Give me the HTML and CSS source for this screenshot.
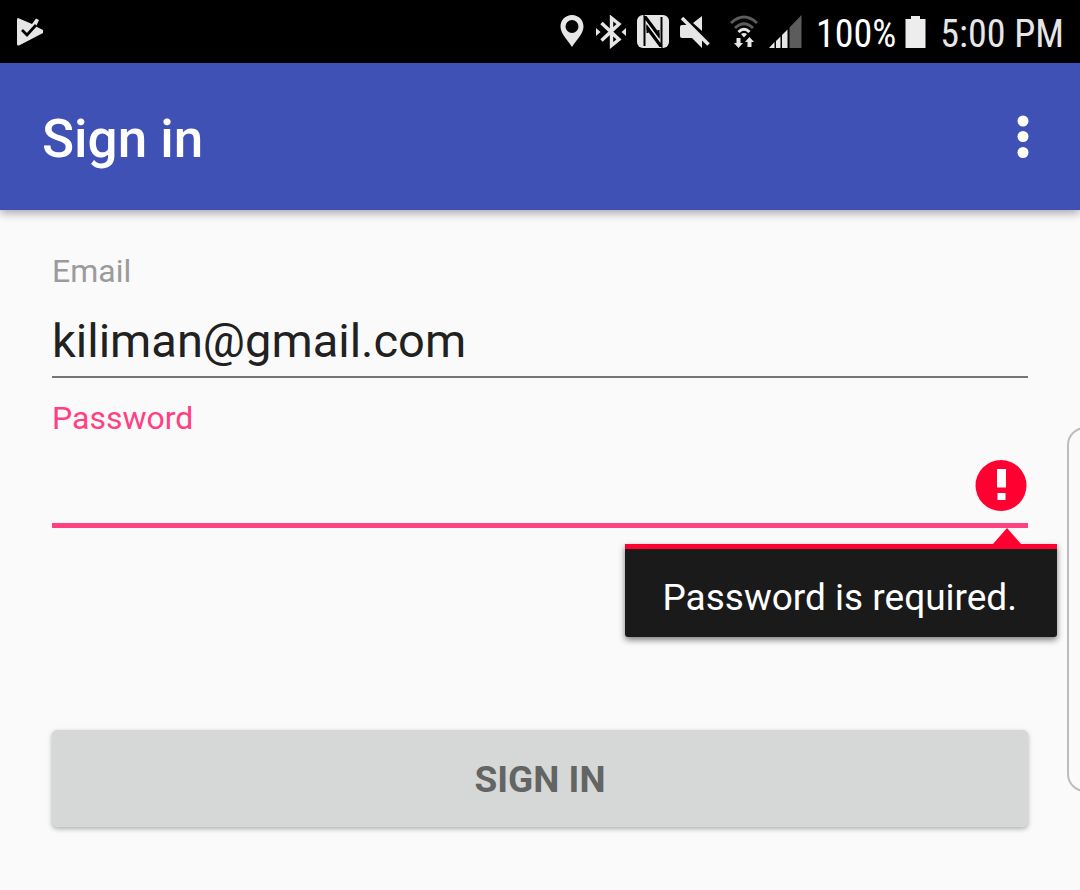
FILE: index.html
```html
<!DOCTYPE html>
<html lang="en">
<head>
<meta charset="utf-8">
<meta name="viewport" content="width=device-width, initial-scale=1">
<title>Sign in</title>
<link rel="stylesheet" href="styles.css">
</head>
<body class="screen">
<div class="status-bar">
  <svg class="status-app" width="28" height="30" viewBox="0 0 28 30" aria-hidden="true">
    <path d="M2 1L16 7L20 1.500L23 3L20 9.500L27 13V16L3 28.500Q1 29 1 27V3Q1 1 2 1Z" fill="#e6e6e6"/>
    <path d="M6 13L11 18L20 8" fill="none" stroke="#000" stroke-width="2.800"/>
  </svg>
  <div class="status-icons">
    <svg width="24" height="34" viewBox="0 0 24 34" aria-hidden="true">
      <path fill-rule="evenodd" d="M12 0C5.500 0 .5 5 .5 11.500C.5 19 8 25 12 32C16 25 23.500 19 23.500 11.500C23.500 5 18.500 0 12 0ZM12 5A6.500 6.500 0 1 1 12 18A6.500 6.500 0 1 1 12 5Z" fill="#e6e6e6"/>
    </svg>
    <svg class="icon-bluetooth" width="30" height="34" viewBox="0 0 30 34" aria-hidden="true">
      <path d="M5.500 8L23 24.500L15.500 30.500V3L23 9L5.500 25.500" fill="none" stroke="#e6e6e6" stroke-width="3.400"/>
      <path d="M0 13L4.500 17L0 21ZM30 13L25.500 17L30 21Z" fill="#e6e6e6"/>
    </svg>
    <svg width="34" height="34" viewBox="0 0 34 34" aria-hidden="true">
      <rect x="1" y="0" width="32" height="33" rx="6" fill="#e6e6e6"/>
      <path d="M8.500 31V2L22.500 21V15M25.500 2V31L11.500 12V18" fill="none" stroke="#000" stroke-width="2"/>
      <path d="M7.500 1H10.500L23.500 18.500V23L9.500 4.500ZM26.500 32H23.500L10.500 14.500V10L24.500 28.500Z" fill="#000"/>
    </svg>
    <svg width="30" height="34" viewBox="0 0 30 34" aria-hidden="true">
      <path d="M0 12Q0 10 2 10H8L22 24V33L12 23H2Q0 23 0 21ZM13 8L22 1V16Z" fill="#e6e6e6"/>
      <path d="M2 3L28.500 29.500" stroke="#e6e6e6" stroke-width="3.500"/>
    </svg>
    <svg class="icon-wifi" width="30" height="34" viewBox="0 0 30 34" aria-hidden="true">
      <g fill="none" stroke-width="3">
        <path d="M2 8Q15 -4 28 8" stroke="#5c5c5c"/>
        <path d="M6 13Q15 4.500 24 13" stroke="#5c5c5c"/>
        <path d="M9.500 17Q15 11.500 20.500 17" stroke="#e6e6e6"/>
      </g>
      <path d="M12 19Q15 17 18 19L15 22.500ZM7.500 23H11.500V28H14L9.500 33L5 28H7.500ZM18.500 32H22.500V27H25L20.500 22L16 27H18.500Z" fill="#e6e6e6"/>
    </svg>
    <svg width="33" height="34" viewBox="0 0 33 34" aria-hidden="true">
      <path d="M0 33L5.500 27V33ZM7 26L11.500 21.500V33H7ZM13 20L18.500 14.500V33H13Z" fill="#e6e6e6"/>
      <path d="M20.500 12.500L32.500 0V33H20.500Z" fill="#5c5c5c"/>
    </svg>
  </div>
  <span class="status-text battery-level">100%</span>
  <svg class="battery" width="21" height="34" viewBox="0 0 21 34" aria-hidden="true">
    <path d="M6 1H15V4H20.500V33H.5V4H6Z" fill="#ededed"/>
  </svg>
  <span class="status-text">5:00 PM</span>
</div>

<header class="app-bar">
  <h1 class="app-title">Sign in</h1>
  <button class="menu-button" type="button" aria-label="More options">
    <svg width="12" height="44" viewBox="0 0 12 44" aria-hidden="true">
      <g fill="#fff"><circle cx="6" cy="6" r="5.500"/><circle cx="6" cy="21.500" r="5.500"/><circle cx="6" cy="37.500" r="5.500"/></g>
    </svg>
  </button>
</header>

<main>
  <form class="form">
    <div class="field">
      <label class="label" for="email">Email</label>
      <input class="input" id="email" type="email" value="kiliman@gmail.com">
    </div>
    <div class="field field-error">
      <label class="label" for="password">Password</label>
      <input class="input" id="password" type="password" aria-invalid="true" aria-describedby="password-error">
      <svg class="error-icon" width="52" height="52" viewBox="0 0 52 52" aria-hidden="true">
        <circle cx="26" cy="25.500" r="25.500" fill="#ff0031"/>
        <path d="M22 9H31V27.500H22ZM22.500 33H30.500V40H22.500Z" fill="#fff"/>
      </svg>
      <div class="error-popup" id="password-error" role="alert">Password is required.</div>
    </div>
    <button class="submit" type="button">SIGN IN</button>
  </form>
</main>
<div class="edge-handle"></div>
</body>
</html>
```

FILE: styles.css
```css
* {
  box-sizing: border-box;
}

.screen {
  margin: 0;
  min-height: 100vh;
  background: #fafafa;
  color: #212121;
  font-family: Roboto, "Liberation Sans", sans-serif;
}

.status-bar {
  display: flex;
  align-items: center;
  height: 63px;
  padding: 0 16px;
  background: #000;
  color: #e6e6e6;
  font-family: "Roboto Condensed", Roboto, sans-serif;
  font-size: 38px;
  line-height: 48px;
  white-space: nowrap;
}

.status-app {
  margin-right: auto;
}

.status-icons {
  display: flex;
  gap: 10px;
  margin-right: 14px;
}

.icon-bluetooth {
  margin-left: 2px;
}

.icon-wifi {
  margin-left: 9px;
}

.status-text {
  padding-top: 4px;
}

.battery-level {
  color: #fff;
}

.battery {
  margin: 0 14px 0 9px;
}

.app-bar {
  display: flex;
  align-items: center;
  justify-content: space-between;
  height: 147px;
  padding: 0 35px 0 42px;
  background: #3f51b5;
  color: #fff;
  box-shadow: 0 3px 9px rgba(0, 0, 0, 0.35);
}

.app-title {
  margin: 0;
  padding-top: 4px;
  font-size: 53px;
  font-weight: 500;
  line-height: 64px;
}

.menu-button {
  display: flex;
  padding: 16px;
  border: 0;
  background: none;
}

.form {
  display: flex;
  flex-direction: column;
  padding: 42px 52px;
}

.field {
  position: relative;
  display: flex;
  flex-direction: column;
  margin-bottom: 21px;
}

.label {
  color: #9b9b9b;
  font-size: 32px;
  line-height: 38px;
}

.input {
  width: 100%;
  height: 88px;
  padding: 14px 0 0;
  border: 0;
  border-bottom: 2px solid #757575;
  border-radius: 0;
  outline: 0;
  background: none;
  color: #212121;
  font: inherit;
  font-size: 47px;
}

.field-error {
  margin-bottom: 202px;
}

.field-error .label {
  color: #ff4081;
}

.field-error .input {
  height: 91px;
  padding-right: 64px;
  border-bottom: 5px solid #ff4081;
}

.error-icon {
  position: absolute;
  right: 1px;
  bottom: 16px;
}

.error-popup {
  position: absolute;
  top: 145px;
  right: -29px;
  padding: 27px 40px 17px 37px;
  border-top: 5px solid #ff0031;
  border-radius: 0 0 3px 3px;
  background: #1a1a1a;
  box-shadow: 0 3px 6px rgba(0, 0, 0, 0.5);
  color: #fff;
  font-size: 37px;
  line-height: 44px;
  white-space: nowrap;
}

.error-popup::before {
  content: "";
  position: absolute;
  right: 36px;
  bottom: 100%;
  width: 28px;
  height: 21px;
  background: #ff0031;
  clip-path: polygon(50% 0, 100% 76%, 100% 100%, 0 100%, 0 76%);
}

.submit {
  height: 97px;
  padding-top: 3px;
  border: 0;
  border-radius: 5px;
  background: #d6d8d7;
  box-shadow: 0 2px 5px rgba(0, 0, 0, 0.3);
  color: #636564;
  font: inherit;
  font-size: 37px;
  font-weight: 700;
}

.edge-handle {
  position: fixed;
  top: 427px;
  right: -8px;
  width: 21px;
  height: 365px;
  border: 2px solid #bdbdbd;
  border-radius: 18px 0 0 18px;
}
```
